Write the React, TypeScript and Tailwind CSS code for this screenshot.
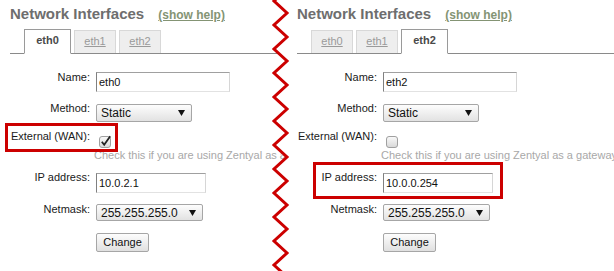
import React from 'react';

const label = 'w-[90px] shrink-0 text-right text-[11px] leading-[13px] text-[#1a1a1a]';

function TextBox({ value, wide }: { value: string; wide?: boolean }) {
  return (
    <div
      className={`ml-[6px] h-[20px] ${wide ? 'w-[134px]' : 'w-[110px]'} border border-t-[#a0a0a0] border-l-[#808080] border-r-[#d6d6d6] border-b-[#e2e2e2] bg-white pl-[2px] text-[11px] leading-[19px] text-[#111]`}
    >
      {value}
    </div>
  );
}

function Select({ value, wide }: { value: string; wide?: boolean }) {
  return (
    <div
      className={`ml-[6px] flex ${wide ? 'h-[17px] w-[107px]' : 'h-[18px] w-[96px]'} items-center justify-between rounded-[2px] border border-[#a6a6a6] bg-linear-to-b from-[#fdfdfd] to-[#e2e2e2] pl-[4px] pr-[6px] text-[12px] leading-[14px] text-[#111]`}
    >
      <span>{value}</span>
      <svg width="7" height="6" viewBox="0 0 7 6">
        <polygon points="0,0 7,0 3.5,6" fill="#111" />
      </svg>
    </div>
  );
}

function Checkbox({ checked }: { checked: boolean }) {
  return (
    <svg width="13" height="13" viewBox="0 0 13 13" className="ml-[9px] mt-[5px]">
      <defs>
        <linearGradient id={checked ? 'cbA' : 'cbB'} x1="0" y1="0" x2="0" y2="1">
          <stop offset="0" stopColor="#fafafa" />
          <stop offset="1" stopColor="#d8d8d8" />
        </linearGradient>
      </defs>
      <rect x="0.5" y="1.5" width="11" height="11" rx="2.5" fill={`url(#${checked ? 'cbA' : 'cbB'})`} stroke="#a0a0a0" />
      {checked && <path d="M2.8 6.8 L5.2 9.8 L11.2 1.2" fill="none" stroke="#222" strokeWidth="1.8" />}
    </svg>
  );
}

interface PanelProps {
  active: number;
  name: string;
  ip: string;
  wan: boolean;
  width: string;
}

function Panel({ active, name, ip, wan, width }: PanelProps) {
  const tabs = ['eth0', 'eth1', 'eth2'];
  return (
    <div className={`${width} shrink-0 overflow-hidden flex flex-col pt-[5px]`}>
      <div className="ml-[10px] flex h-[18px] items-baseline whitespace-nowrap">
        <span className="text-[15px] font-bold leading-[18px] text-[#6e6e6e]">Network Interfaces</span>
        <span className="ml-[14px] text-[12px] font-bold leading-[18px] text-[#849474] underline">(show help)</span>
      </div>

      {/* tabs */}
      <div className="ml-[10px] mt-[6px] flex items-end gap-[3px] border-b border-[#8a8a8a] pl-[14px]">
        {tabs.map((t, i) =>
          i === active ? (
            <div
              key={t}
              className="-mb-px flex h-[25px] w-[47px] items-center justify-center border border-[#9a9a9a] border-b-white bg-white pb-[2px] text-[11px] font-bold text-[#4a4a4a]"
            >
              {t}
            </div>
          ) : (
            <div
              key={t}
              className="flex h-[23px] w-[42px] items-center justify-center border border-b-0 border-[#d8d8d8] bg-[#eeeeee] pb-[1px] text-[11px] text-[#9a9a9a] underline"
            >
              {t}
            </div>
          )
        )}
      </div>

      <div className="mt-[18px] flex items-start">
        <div className={`${label} -mt-px`}>Name:</div>
        <TextBox value={name} wide />
      </div>

      <div className="mt-[12px] flex items-start">
        <div className={`${label} -mt-[2px]`}>Method:</div>
        <Select value="Static" />
      </div>

      <div className="mt-[8px] flex h-[17px] items-start">
        <div className={label}>External (WAN):</div>
        <Checkbox checked={wan} />
      </div>

      <div className="mt-[2px] whitespace-nowrap pl-[94px] text-[11px] leading-[13px] text-[#a8a8a8]">
        Check this if you are using Zentyal as a gateway
      </div>

      <div className="mt-[11px] flex items-start">
        <div className={`${label} -mt-[2px]`}>IP address:</div>
        <TextBox value={ip} />
      </div>

      <div className="mt-[11px] flex items-start">
        <div className={`${label} -mt-px`}>Netmask:</div>
        <Select value="255.255.255.0" wide />
      </div>

      <div className="mt-[12px] flex">
        <div className="ml-[96px] flex h-[19px] w-[53px] items-center justify-center rounded-[2px] border border-[#a6a6a6] bg-linear-to-b from-[#fdfdfd] to-[#e0e0e0] text-[11px] text-[#111]">
          Change
        </div>
      </div>
    </div>
  );
}

function Zigzag() {
  const pts: string[] = [];
  for (let k = -1; k <= 12; k++) {
    pts.push(`8,${1 + 24 * k}`);
    pts.push(`21,${13 + 24 * k}`);
  }
  const line = pts.join(' ');
  return (
    <svg className="absolute left-[266px] top-0" width="27" height="271" viewBox="0 0 27 271">
      <polygon points={`${line} 27,301 27,-23`} fill="#fff" />
      <polyline points={line} fill="none" stroke="#cc0000" strokeWidth="3" />
    </svg>
  );
}

export default function App() {
  return (
    <div className="relative flex h-[271px] w-[614px] overflow-hidden bg-white font-['Liberation_Sans',Arial,sans-serif]">
      <Panel active={0} name="eth0" ip="10.0.2.1" wan width="w-[287px]" />
      <Panel active={2} name="eth2" ip="10.0.0.254" wan={false} width="w-[327px]" />
      <Zigzag />

      {/* highlight boxes */}
      <div className="absolute left-[5px] top-[123px] h-[29px] w-[113px] border-[3px] border-[#cc0000]" />
      <div className="absolute left-[313px] top-[162px] h-[37px] w-[190px] border-[3px] border-[#cc0000]" />
    </div>
  );
}
